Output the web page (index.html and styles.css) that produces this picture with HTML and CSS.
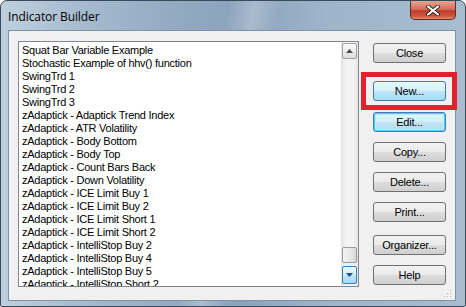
FILE: index.html
```html
<!DOCTYPE html>
<html>
<head>
<meta charset="utf-8">
<link rel="stylesheet" href="styles.css">
</head>
<body>
<div class="window">
  <div class="titlebar">
    <span class="title">Indicator Builder</span>
    <div class="close-x">
      <svg width="16" height="11" viewBox="0 0 16 11"><path d="M3 1.5 L13 9.5 M13 1.5 L3 9.5" stroke="#3a2020" stroke-width="4" stroke-linecap="round"/><path d="M3 1.5 L13 9.5 M13 1.5 L3 9.5" stroke="#ffffff" stroke-width="2.2" stroke-linecap="round"/></svg>
    </div>
  </div>
  <div class="client">
    <div class="listbox">
      <ul class="items">
        <li>Squat Bar Variable Example</li>
        <li>Stochastic Example of hhv() function</li>
        <li>SwingTrd 1</li>
        <li>SwingTrd 2</li>
        <li>SwingTrd 3</li>
        <li>zAdaptick - Adaptick Trend Index</li>
        <li>zAdaptick - ATR Volatility</li>
        <li>zAdaptick - Body Bottom</li>
        <li>zAdaptick - Body Top</li>
        <li>zAdaptick - Count Bars Back</li>
        <li>zAdaptick - Down Volatility</li>
        <li>zAdaptick - ICE Limit Buy 1</li>
        <li>zAdaptick - ICE Limit Buy 2</li>
        <li>zAdaptick - ICE Limit Short 1</li>
        <li>zAdaptick - ICE Limit Short 2</li>
        <li>zAdaptick - IntelliStop Buy 2</li>
        <li>zAdaptick - IntelliStop Buy 4</li>
        <li>zAdaptick - IntelliStop Buy 5</li>
        <li>zAdaptick - IntelliStop Short 2</li>
      </ul>
      <div class="scrollbar">
        <div class="sb-btn sb-up"><svg width="7" height="4" viewBox="0 0 7 4"><path d="M0 4 L3.5 0 L7 4 Z" fill="#4d4d4d"/></svg></div>
        <div class="sb-track"></div>
        <div class="sb-thumb"></div>
        <div class="sb-btn sb-down"><svg width="7" height="4" viewBox="0 0 7 4"><path d="M0 0 L7 0 L3.5 4 Z" fill="#1e4f7a"/></svg></div>
      </div>
    </div>
    <div class="buttons">
      <div class="btn b-close">Close</div>
      <div class="btn hover b-new">New...</div>
      <div class="btn focus b-edit">Edit...</div>
      <div class="btn b-copy">Copy...</div>
      <div class="btn b-delete">Delete...</div>
      <div class="btn b-print">Print...</div>
      <div class="btn b-org">Organizer...</div>
      <div class="btn b-help">Help</div>
    </div>
    <div class="highlight"></div>
    <svg class="grip" width="8" height="8" viewBox="0 0 8 8">
      <rect x="6" y="0" width="1" height="1" fill="#b8b8b8"/>
      <rect x="3" y="3" width="1" height="1" fill="#b8b8b8"/>
      <rect x="6" y="3" width="1" height="1" fill="#b8b8b8"/>
      <rect x="0" y="6" width="1" height="1" fill="#b8b8b8"/>
      <rect x="3" y="6" width="1" height="1" fill="#b8b8b8"/>
      <rect x="6" y="6" width="1" height="1" fill="#b8b8b8"/>
    </svg>
  </div>
</div>
</body>
</html>
```
FILE: styles.css
```css
html, body {
  margin: 0;
  padding: 0;
  background: #ffffff;
}
.window {
  width: 466px;
  height: 307px;
  box-sizing: border-box;
  border: 1px solid #3b4a59;
  border-bottom-width: 1px;
  border-radius: 7px 7px 2px 2px;
  background:
    linear-gradient(100deg, rgba(255,255,255,0) 0%, rgba(255,255,255,0) 44%, rgba(255,255,255,0.25) 49%, rgba(255,255,255,0) 54%, rgba(255,255,255,0) 100%),
    linear-gradient(90deg, #bfcfdf 0%, #a5bace 18%, #90a8c0 40%, #8aa3bc 52%, #9db4c9 70%, #a8bdd0 100%);
  display: flex;
  flex-direction: column;
  overflow: hidden;
}
.titlebar {
  height: 29px;
  flex: none;
  display: flex;
  align-items: flex-start;
  justify-content: space-between;
  padding-left: 7px;
}
.title {
  font-family: "Open Sans", "Noto Sans", sans-serif;
  font-size: 12px;
  color: #000000;
  margin-top: 7px;
  letter-spacing: -0.1px;
}
.close-x {
  width: 46px;
  height: 19px;
  margin-right: 9px;
  box-sizing: border-box;
  border: 1px solid #5d2a2a;
  border-top: none;
  border-radius: 0 0 5px 5px;
  background: linear-gradient(180deg, #e8a493 0%, #d5705e 45%, #c23a2a 55%, #cf5a3e 85%, #e6906a 100%);
  display: flex;
  align-items: center;
  justify-content: center;
}
.client {
  flex: 1;
  margin: 0 9px 5px 7px;
  background: #f0f0f0;
  border: 1px solid #7f93a6;
  position: relative;
  display: flex;
  align-items: flex-start;
  padding: 10px 0 0 9px;
  box-sizing: border-box;
}
.listbox {
  width: 341px;
  height: 246px;
  box-sizing: border-box;
  border: 1px solid #828790;
  background: #ffffff;
  display: flex;
  overflow: hidden;
}
.items {
  list-style: none;
  margin: 0;
  padding: 2px 0 0 3px;
  flex: 1;
  font-family: "Liberation Sans", Arial, sans-serif;
  font-size: 11px;
  letter-spacing: -0.25px;
  line-height: 13px;
  color: #000;
  overflow: hidden;
}
.items li {
  height: 13px;
  white-space: nowrap;
}
.scrollbar {
  width: 17px;
  flex: none;
  display: flex;
  flex-direction: column;
  align-items: center;
  background: linear-gradient(90deg, #e3e3e3 0%, #f3f3f3 30%, #f3f3f3 70%, #e6e6e6 100%);
  padding-top: 1px;
  box-sizing: border-box;
}
.sb-btn {
  width: 15px;
  height: 16px;
  box-sizing: border-box;
  border: 1px solid #a0a0a0;
  border-radius: 2px;
  background: linear-gradient(180deg, #f9f9f9 0%, #ececec 50%, #dcdcdc 100%);
  display: flex;
  align-items: center;
  justify-content: center;
  flex: none;
}
.sb-track {
  flex: 1;
}
.sb-thumb {
  width: 15px;
  height: 16px;
  box-sizing: border-box;
  border: 1px solid #9a9a9a;
  border-radius: 2px;
  background: linear-gradient(90deg, #f4f4f4 0%, #e9e9e9 50%, #d8d8d8 100%);
  flex: none;
  margin-bottom: 3px;
}
.sb-down {
  height: 18px;
  border-color: #3c7fb1;
  background: linear-gradient(180deg, #eaf6fd 0%, #d9f0fc 45%, #bee6fd 55%, #a7d9f5 100%);
  margin-bottom: 2px;
}
.buttons {
  display: flex;
  flex-direction: column;
  margin-left: 14px;
  margin-top: 2px;
}
.btn {
  width: 73px;
  height: 20px;
  box-sizing: border-box;
  border: 1px solid #707070;
  border-radius: 3px;
  background: linear-gradient(180deg, #f2f2f2 0%, #ebebeb 48%, #dddddd 52%, #cfcfcf 100%);
  font-family: "Liberation Sans", Arial, sans-serif;
  font-size: 11px;
  letter-spacing: -0.2px;
  color: #000;
  display: flex;
  align-items: center;
  justify-content: center;
  margin-bottom: 10px;
}
.btn.hover {
  border-color: #3c7fb1;
  background: linear-gradient(180deg, #eaf6fd 0%, #d9f0fc 48%, #bee6fd 52%, #a7d9f5 100%);
}
.btn.focus {
  border-color: #3c7fb1;
  box-shadow: inset 0 0 0 1px #48d0f5, inset 0 0 0 2px #bfeafc;
  background: linear-gradient(180deg, #e5f4fc 0%, #d6edf9 48%, #c4e5f6 52%, #b3d9ef 100%);
}
.b-close { margin-bottom: 18px; }
.b-new { margin-bottom: 11px; }
.b-print { margin-bottom: 13px; }
.highlight {
  position: absolute;
  left: 352px;
  top: 41px;
  width: 96px;
  height: 38px;
  box-sizing: border-box;
  border: 5px solid #e4202c;
}
.grip {
  position: absolute;
  right: 3px;
  bottom: 2px;
}
```
